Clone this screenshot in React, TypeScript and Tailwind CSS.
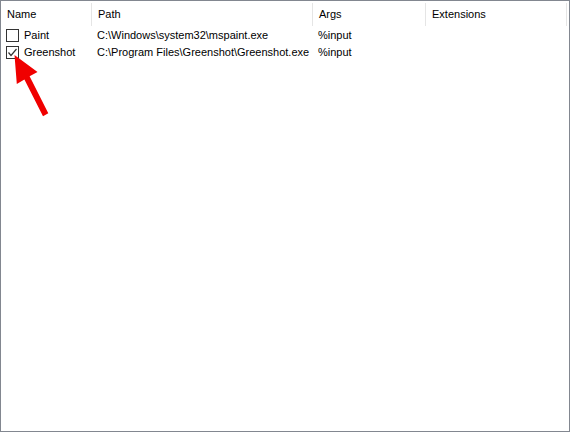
import React from "react";

const cols = [
  { w: "w-[91px]", label: "Name" },
  { w: "w-[221px]", label: "Path" },
  { w: "w-[113px]", label: "Args" },
  { w: "w-[141px]", label: "Extensions" },
];

const rows = [
  { name: "Paint", path: "C:\\Windows\\system32\\mspaint.exe", args: "%input", checked: false },
  { name: "Greenshot", path: "C:\\Program Files\\Greenshot\\Greenshot.exe", args: "%input", checked: true },
];

function Check({ checked }: { checked: boolean }) {
  return (
    <div className="w-[13px] h-[13px] border border-[#333333] bg-white flex items-center justify-center shrink-0">
      {checked && (
        <svg width="11" height="11" viewBox="0 0 11 11">
          <path d="M1.5 5.5 L4 8.5 L9.5 2" fill="none" stroke="#333" strokeWidth="1.2" />
        </svg>
      )}
    </div>
  );
}

export default function App() {
  return (
    <div
      className="relative w-[570px] h-[432px] bg-white border border-[#828790] text-[11px] text-black overflow-hidden"
      style={{ fontFamily: '"Liberation Sans", Arial, sans-serif' }}
    >
      <div className="flex h-[26px]">
        {cols.map((c) => (
          <div key={c.label} className={`${c.w} flex items-center pl-[6px] border-r border-[#e5e5e5] mt-[2px] mb-[1px]`}>
            {c.label}
          </div>
        ))}
      </div>
      <div className="flex flex-col">
        {rows.map((r) => (
          <div key={r.name} className="flex h-[17px] items-center">
            <div className="w-[91px] flex items-center pl-[5px] gap-[5px]">
              <Check checked={r.checked} />
              <span>{r.name}</span>
            </div>
            <div className="w-[221px] pl-[5px] whitespace-nowrap">{r.path}</div>
            <div className="w-[113px] pl-[5px]">{r.args}</div>
            <div className="w-[141px]"></div>
          </div>
        ))}
      </div>
      <svg className="absolute left-0 top-0 pointer-events-none" width="60" height="120" viewBox="0 0 60 120">
        <polygon
          points="13.5,54 15.8,83 23.4,78.5 42,115.3 47.3,112.3 28.6,75.2 36.5,71"
          fill="#f00000"
        />
      </svg>
    </div>
  );
}
